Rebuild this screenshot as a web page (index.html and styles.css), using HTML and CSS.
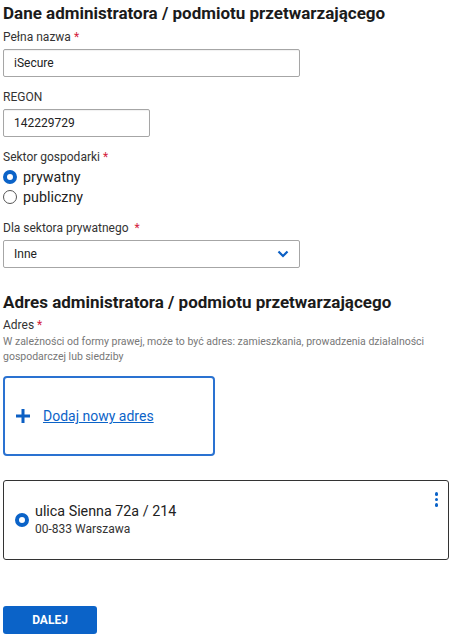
FILE: index.html
```html
<!DOCTYPE html>
<html lang="pl">
<head>
    <meta name="viewport" content="width=device-width, initial-scale=1.0">
    <title>Dane administratora</title>
    <link rel="stylesheet" href="styles.css">
</head>
<body>
    <h2 class="title">Dane administratora / podmiotu przetwarzającego</h2>

    <div class="field field-first">
        <label class="label" for="full-name">Pełna nazwa <span class="req">*</span></label>
        <input class="input input-wide" id="full-name" type="text" value="iSecure">
    </div>

    <div class="field">
        <label class="label" for="regon">REGON</label>
        <input class="input input-short" id="regon" type="text" value="142229729">
    </div>

    <div class="field">
        <div class="label">Sektor gospodarki <span class="req">*</span></div>
        <div class="radio-row">
            <span class="radio radio-on"></span>
            <span>prywatny</span>
        </div>
        <div class="radio-row">
            <span class="radio"></span>
            <span>publiczny</span>
        </div>
    </div>

    <div class="field field-select">
        <div class="label">Dla sektora prywatnego &nbsp;<span class="req">*</span></div>
        <div class="select">
            <span>Inne</span>
            <svg class="chevron" width="12" height="8" viewBox="0 0 12 8">
                <path d="M1.5 1.5 L6 6 L10.5 1.5" fill="none" stroke="#0b5fc4" stroke-width="2.2"/>
            </svg>
        </div>
    </div>

    <h2 class="title title-second">Adres administratora / podmiotu przetwarzającego</h2>
    <div class="label">Adres <span class="req">*</span></div>
    <p class="hint">W zależności od formy prawej, może to być adres: zamieszkania, prowadzenia działalności gospodarczej lub siedziby</p>

    <div class="add-box">
        <svg class="plus" width="16" height="16" viewBox="0 0 16 16">
            <path d="M8 1 V15 M1 8 H15" stroke="#0b5fc4" stroke-width="3"/>
        </svg>
        <a href="#" class="add-link">Dodaj nowy adres</a>
    </div>

    <div class="address-card">
        <span class="radio radio-on"></span>
        <div class="address-text">
            <div class="street">ulica Sienna 72a / 214</div>
            <div class="city">00-833 Warszawa</div>
        </div>
        <span class="kebab"><i></i><i></i><i></i></span>
    </div>

    <button class="next-button">DALEJ</button>
</body>
</html>
```

FILE: styles.css
```css
body {
    margin: 0;
    padding: 0 3px;
    font-family: Roboto, "Liberation Sans", Arial, sans-serif;
    color: #1b1b1b;
    background: #fff;
}
.title {
    font-size: 17px;
    line-height: 22px;
    font-weight: 700;
    margin: 2px 0 0;
    color: #1b1b1b;
}
.title-second {
    margin-top: 23px;
    margin-bottom: 4px;
}
.field {
    margin-top: 12px;
}
.field-first {
    margin-top: 5px;
}
.field-select {
    margin-top: 13px;
}
.label {
    display: block;
    font-size: 12px;
    line-height: 16px;
    color: #333;
    margin-bottom: 4px;
}
.req {
    color: #d4213d;
}
.input {
    display: block;
    box-sizing: border-box;
    height: 28px;
    padding: 0 10px;
    border: 1px solid #a6a6a6;
    border-radius: 2px;
    font-family: inherit;
    font-size: 12px;
    color: #222;
    box-shadow: inset 0 1px 1px rgba(0, 0, 0, 0.06);
}
.input-wide {
    width: 297px;
}
.input-short {
    width: 147px;
}
.field .label + .radio-row {
    margin-top: -2px;
}
.radio-row {
    display: flex;
    align-items: center;
    gap: 6px;
    height: 20px;
    font-size: 14.3px;
    color: #222;
}
.radio {
    display: inline-block;
    box-sizing: border-box;
    width: 14px;
    height: 14px;
    border-radius: 50%;
    border: 1px solid #555;
    background: #fff;
    flex-shrink: 0;
}
.radio-on {
    border: 4px solid #0b63c8;
}
.select {
    box-sizing: border-box;
    width: 297px;
    height: 28px;
    display: flex;
    align-items: center;
    justify-content: space-between;
    padding: 0 10px 0 10px;
    border: 1px solid #a6a6a6;
    border-radius: 2px;
    font-size: 12px;
    color: #222;
}
.hint {
    margin: -3px 0 0;
    font-size: 10.5px;
    line-height: 15px;
    color: #777;
}
.add-box {
    box-sizing: border-box;
    width: 212px;
    height: 80px;
    margin-top: 12px;
    border: 2px solid #2a72d1;
    border-radius: 4px;
    display: flex;
    align-items: center;
    padding-left: 10px;
    gap: 12px;
}
.add-link {
    font-size: 14px;
    color: #0b63c8;
    text-decoration: underline;
}
.address-card {
    box-sizing: border-box;
    width: 446px;
    height: 80px;
    margin-top: 24px;
    border: 1.5px solid #333;
    border-radius: 3px;
    display: flex;
    align-items: center;
    padding: 0 10px 0 11px;
    gap: 6px;
    position: relative;
}
.address-text {
    display: flex;
    flex-direction: column;
}
.street {
    font-size: 14.3px;
    line-height: 19px;
    color: #222;
}
.city {
    font-size: 12px;
    line-height: 17px;
    color: #333;
}
.kebab {
    position: absolute;
    top: 11px;
    right: 10px;
    display: flex;
    flex-direction: column;
    gap: 2px;
}
.kebab i {
    display: block;
    width: 3.5px;
    height: 3.5px;
    border-radius: 50%;
    background: #0b63c8;
}
.next-button {
    display: block;
    margin-top: 46px;
    width: 94px;
    height: 28px;
    border: none;
    border-radius: 3px;
    background: #0b63c8;
    color: #fff;
    font-family: inherit;
    font-size: 12px;
    font-weight: 700;
    cursor: pointer;
}
```
